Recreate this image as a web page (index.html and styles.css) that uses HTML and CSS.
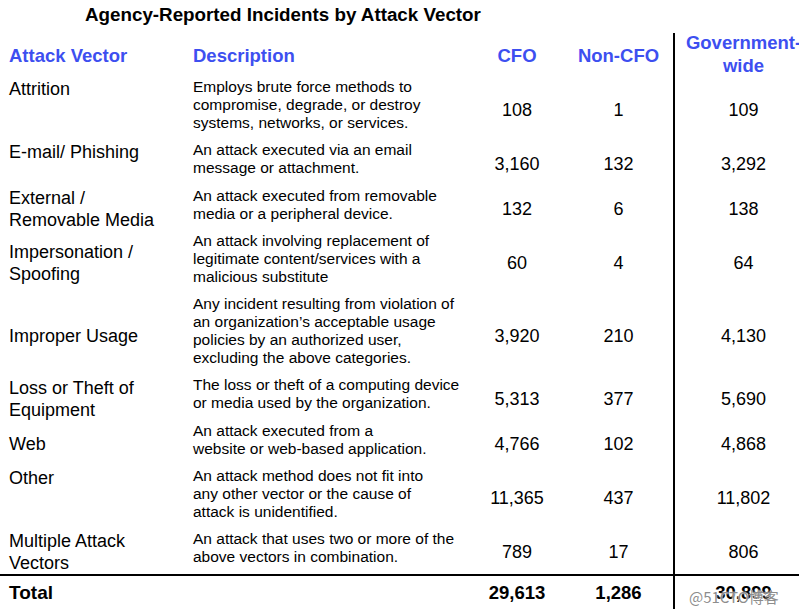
FILE: index.html
```html
<!DOCTYPE html>
<html lang="en">
<head>
<meta charset="utf-8">
<title>Agency-Reported Incidents by Attack Vector</title>
<link rel="stylesheet" href="styles.css">
</head>
<body>
<div class="page">
  <h1 class="title">Agency-Reported Incidents by Attack Vector</h1>
  <div class="table">
    <div class="row head">
      <div class="cell c-name">Attack Vector</div>
      <div class="cell c-desc">Description</div>
      <div class="cell c-num">CFO</div>
      <div class="cell c-num">Non-CFO</div>
      <div class="cell c-num c-gov">Government-<br>wide</div>
    </div>

    <div class="row">
      <div class="cell c-name top">Attrition</div>
      <div class="cell c-desc">Employs brute force methods to<br>compromise, degrade, or destroy<br>systems, networks, or services.</div>
      <div class="cell c-num">108</div>
      <div class="cell c-num">1</div>
      <div class="cell c-num c-gov">109</div>
    </div>

    <div class="row">
      <div class="cell c-name top">E-mail/ Phishing</div>
      <div class="cell c-desc">An attack executed via an email<br>message or attachment.</div>
      <div class="cell c-num">3,160</div>
      <div class="cell c-num">132</div>
      <div class="cell c-num c-gov">3,292</div>
    </div>

    <div class="row">
      <div class="cell c-name">External /<br>Removable Media</div>
      <div class="cell c-desc">An attack executed from removable<br>media or a peripheral device.</div>
      <div class="cell c-num">132</div>
      <div class="cell c-num">6</div>
      <div class="cell c-num c-gov">138</div>
    </div>

    <div class="row">
      <div class="cell c-name">Impersonation /<br>Spoofing</div>
      <div class="cell c-desc">An attack involving replacement of<br>legitimate content/services with a<br>malicious substitute</div>
      <div class="cell c-num">60</div>
      <div class="cell c-num">4</div>
      <div class="cell c-num c-gov">64</div>
    </div>

    <div class="row">
      <div class="cell c-name">Improper Usage</div>
      <div class="cell c-desc">Any incident resulting from violation of<br>an organization’s acceptable usage<br>policies by an authorized user,<br>excluding the above categories.</div>
      <div class="cell c-num">3,920</div>
      <div class="cell c-num">210</div>
      <div class="cell c-num c-gov">4,130</div>
    </div>

    <div class="row">
      <div class="cell c-name">Loss or Theft of<br>Equipment</div>
      <div class="cell c-desc">The loss or theft of a computing device<br>or media used by the organization.</div>
      <div class="cell c-num">5,313</div>
      <div class="cell c-num">377</div>
      <div class="cell c-num c-gov">5,690</div>
    </div>

    <div class="row">
      <div class="cell c-name">Web</div>
      <div class="cell c-desc">An attack executed from a<br>website or web-based application.</div>
      <div class="cell c-num">4,766</div>
      <div class="cell c-num">102</div>
      <div class="cell c-num c-gov">4,868</div>
    </div>

    <div class="row">
      <div class="cell c-name top">Other</div>
      <div class="cell c-desc">An attack method does not fit into<br>any other vector or the cause of<br>attack is unidentified.</div>
      <div class="cell c-num">11,365</div>
      <div class="cell c-num">437</div>
      <div class="cell c-num c-gov">11,802</div>
    </div>

    <div class="row last">
      <div class="cell c-name">Multiple Attack<br>Vectors</div>
      <div class="cell c-desc">An attack that uses two or more of the<br>above vectors in combination.</div>
      <div class="cell c-num">789</div>
      <div class="cell c-num">17</div>
      <div class="cell c-num c-gov">806</div>
    </div>

    <div class="row total">
      <div class="cell c-name">Total</div>
      <div class="cell c-desc"></div>
      <div class="cell c-num">29,613</div>
      <div class="cell c-num">1,286</div>
      <div class="cell c-num c-gov">30,899</div>
    </div>
  </div>
  <span class="watermark">@51CTO博客</span>
</div>
</body>
</html>
```

FILE: styles.css
```css
html, body {
  margin: 0;
  padding: 0;
  background: #ffffff;
  overflow: hidden;
}

body {
  font-family: "Liberation Sans", Arial, sans-serif;
  color: #000000;
}

.page {
  position: relative;
  width: 799px;
  height: 616px;
  overflow: hidden;
}

.title {
  margin: 0 0 7px 0;
  padding: 4px 0 0 85px;
  font-size: 18.8px;
  line-height: 22px;
  font-weight: bold;
  white-space: nowrap;
}

.table {
  width: 812px;
}

.row {
  display: grid;
  grid-template-columns: 185px 285px 94px 109px 139px;
}

.cell {
  display: flex;
  flex-direction: column;
  justify-content: center;
  box-sizing: border-box;
  white-space: nowrap;
}

/* description drives the row height */
.c-desc {
  padding: 4px 0 5.25px 8px;
  font-size: 15.5px;
  line-height: 18px;
  justify-content: flex-start;
}

/* names and numbers are centred slightly below the row middle,
   without contributing to the row height */
.c-name {
  padding-left: 9px;
  font-size: 18px;
  line-height: 22px;
  margin-top: -16px;
  margin-bottom: -24px;
}

.c-name.top {
  justify-content: flex-start;
  margin-top: 0;
  padding-top: 4px;
  margin-bottom: -40px;
}

.c-num {
  align-items: center;
  text-align: center;
  font-size: 18px;
  line-height: 22px;
  margin-top: -16px;
  margin-bottom: -24px;
}

.c-gov {
  border-left: 2px solid #000000;
}

/* header */
.row.head {
  grid-template-rows: 41px;
}

.row.head .cell {
  color: #3d4ff0;
  font-weight: bold;
  font-size: 18.5px;
  line-height: 23px;
  padding-top: 0;
  padding-bottom: 0;
  margin-top: -8.5px;
  margin-bottom: -11.5px;
  justify-content: center;
}

.row.head .c-gov {
  margin-top: 0;
  padding-top: 0;
  margin-bottom: 0;
}

/* last data row sits a little above the total rule */
.row.last .c-desc {
  padding-bottom: 8px;
}

.row.last .c-name,
.row.last .c-num {
  margin-bottom: -20px;
}

/* total */
.row.total {
  border-top: 2px solid #000000;
  grid-template-rows: 33px;
}

.row.total .cell {
  font-weight: bold;
  margin-top: 0;
  margin-bottom: 0;
  padding-top: 0;
  padding-bottom: 0;
  justify-content: center;
}

.row.total .c-name {
  font-size: 19px;
  padding-left: 9px;
}

.row.total .c-num {
  font-size: 18.5px;
}

.watermark {
  position: absolute;
  left: 689px;
  top: 587px;
  font-family: "Noto Sans CJK SC", "Liberation Sans", sans-serif;
  font-size: 15px;
  line-height: 20px;
  color: rgba(110, 110, 110, 0.8);
  text-shadow: 0 0 2px #ffffff, 0 0 1px #ffffff;
  white-space: nowrap;
}
```
